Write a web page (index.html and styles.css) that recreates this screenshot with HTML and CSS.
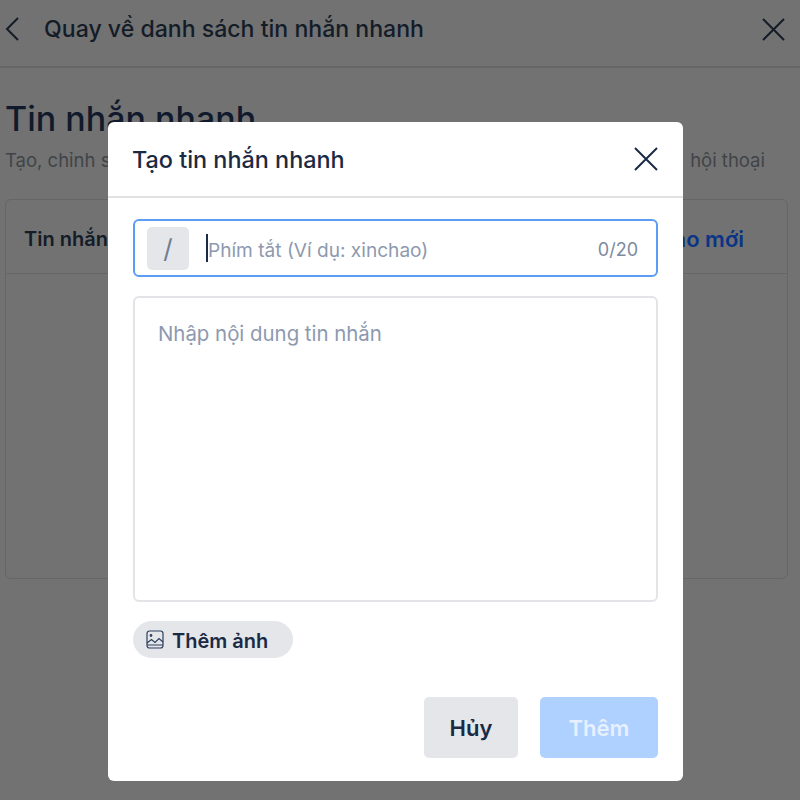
FILE: index.html
```html
<!DOCTYPE html>
<html lang="vi">
<head>
<meta charset="UTF-8">
<meta name="viewport" content="width=device-width, initial-scale=1.0">
<title>Tin nhắn nhanh</title>
<link rel="stylesheet" href="styles.css">
</head>
<body>
<div class="page">
    <header class="topbar">
        <svg class="back-icon" width="14" height="24" viewBox="0 0 14 24"><path d="M13 1 L2 12 L13 23"/></svg>
        <span class="topbar-title">Quay về danh sách tin nhắn nhanh</span>
        <svg class="close-icon" width="24" height="24" viewBox="0 0 24 24"><path d="M2 2 L23 23 M23 2 L2 23"/></svg>
    </header>
    <main class="content">
        <h1 class="page-title">Tin nhắn nhanh</h1>
        <p class="page-desc"><span>Tạo, chỉnh s</span><span>hội thoại</span></p>
        <section class="card">
            <div class="card-head">
                <span class="card-title">Tin nhắn</span>
                <span class="card-link">Tạo mới</span>
            </div>
        </section>
    </main>
</div>

<div class="modal">
    <div class="modal-head">
        <h2 class="modal-title">Tạo tin nhắn nhanh</h2>
        <svg class="close-icon modal-close" width="24" height="24" viewBox="0 0 24 24"><path d="M1 1 L23 23 M23 1 L1 23"/></svg>
    </div>
    <div class="modal-body">
        <div class="shortcut">
            <span class="slash">/</span>
            <span class="caret"></span>
            <span class="shortcut-text">Phím tắt (Ví dụ: xinchao)</span>
            <span class="counter">0/20</span>
        </div>
        <div class="message">Nhập nội dung tin nhắn</div>
        <div class="add-image">
            <svg width="18" height="19" viewBox="0 0 18 19"><rect x="1" y="1" width="16" height="17" rx="2.5"/><circle cx="5" cy="5.5" r="0.8"/><path d="M1 13 L5.5 9.5 L9 12.5 L13 8.5 L17 12 M1 15 H17"/></svg>
            <span>Thêm ảnh</span>
        </div>
    </div>
    <div class="modal-foot">
        <button class="btn btn-cancel">Hủy</button>
        <button class="btn btn-add">Thêm</button>
    </div>
</div>
</body>
</html>
```

FILE: styles.css
```css
* {
    box-sizing: border-box;
}

body {
    margin: 0;
    height: 800px;
    overflow: hidden;
    background-color: #727272;
    font-family: Inter, "Noto Sans", sans-serif;
    color: #1b2a44;
}

.topbar {
    display: flex;
    align-items: center;
    height: 68px;
    padding: 0 15px 8px 5px;
    border-bottom: 2px solid #666;
}

.back-icon path,
.close-icon path {
    fill: none;
    stroke: #141c28;
    stroke-width: 2;
}

.modal-close path {
    stroke: #1b2a44;
}

.topbar-title {
    flex: 1;
    margin-left: 25px;
    font-size: 23.1px;
    font-weight: 500;
    color: #141c28;
}

.content {
    padding: 30px 12px 0 5px;
}

.page-title {
    margin: 0;
    font-size: 34px;
    line-height: 42px;
    font-weight: 500;
    color: #101a2c;
}

.page-desc {
    display: flex;
    justify-content: space-between;
    margin: 8px 23px 0 0;
    font-size: 18.5px;
    line-height: 24px;
    color: #404448;
}

.card {
    height: 380px;
    margin-top: 27px;
    border: 1px solid #666;
    border-radius: 6px;
}

.card-head {
    display: flex;
    justify-content: space-between;
    align-items: center;
    height: 74px;
    padding: 4px 43px 0 18px;
    border-bottom: 1px solid #666;
    font-size: 20px;
    font-weight: 600;
}

.card-title {
    color: #141c28;
}

.card-link {
    color: #0a3585;
    font-size: 22px;
}

.modal {
    position: absolute;
    left: 108px;
    top: 122px;
    width: 575px;
    height: 659px;
    display: flex;
    flex-direction: column;
    background-color: #fff;
    border-radius: 6px;
}

.modal-head {
    display: flex;
    justify-content: space-between;
    align-items: center;
    height: 76px;
    padding: 0 25px 0 24px;
    border-bottom: 2px solid #e2e2e2;
}

.modal-title {
    margin: 0;
    font-size: 23.4px;
    font-weight: 500;
}

.modal-body {
    flex: 1;
    display: flex;
    flex-direction: column;
    padding: 21px 25px 0;
}

.shortcut {
    display: flex;
    align-items: center;
    height: 58px;
    padding: 0 18px 0 12px;
    border: 2px solid #5b9cf5;
    border-radius: 6px;
}

.slash {
    display: flex;
    justify-content: center;
    align-items: center;
    width: 42px;
    height: 43px;
    background-color: #e4e6ea;
    border-radius: 5px;
    font-size: 26px;
    color: #717d90;
}

.caret {
    width: 2px;
    height: 28px;
    margin-left: 17px;
    background-color: #1b2a44;
}

.shortcut-text {
    flex: 1;
    padding-top: 3px;
    font-size: 19.1px;
    color: #8d99ae;
}

.counter {
    padding-top: 3px;
    font-size: 18px;
    color: #7c8aa1;
}

.message {
    height: 306px;
    margin-top: 19px;
    padding: 23px 23px;
    border: 2px solid #e2e4e7;
    border-radius: 6px;
    font-size: 20.4px;
    color: #8d99ae;
}

.add-image {
    display: flex;
    align-items: center;
    gap: 8px;
    width: 160px;
    height: 37px;
    margin-top: 19px;
    padding-left: 13px;
    background-color: #e4e6ea;
    border-radius: 19px;
    font-size: 20px;
    font-weight: 600;
}

.add-image span {
    padding-top: 3px;
}

.add-image svg {
    fill: none;
    stroke: #2d3f5e;
    stroke-width: 1.2;
}

.modal-foot {
    display: flex;
    justify-content: flex-end;
    gap: 22px;
    padding: 0 25px 23px;
}

.btn {
    height: 61px;
    padding-top: 2px;
    border: 0;
    border-radius: 5px;
    font-family: inherit;
    font-size: 22px;
    font-weight: 600;
}

.btn-cancel {
    width: 94px;
    background-color: #e4e6ea;
    color: #1b2a44;
}

.btn-add {
    width: 118px;
    background-color: #afd1ff;
    color: #e6f0ff;
}
```
